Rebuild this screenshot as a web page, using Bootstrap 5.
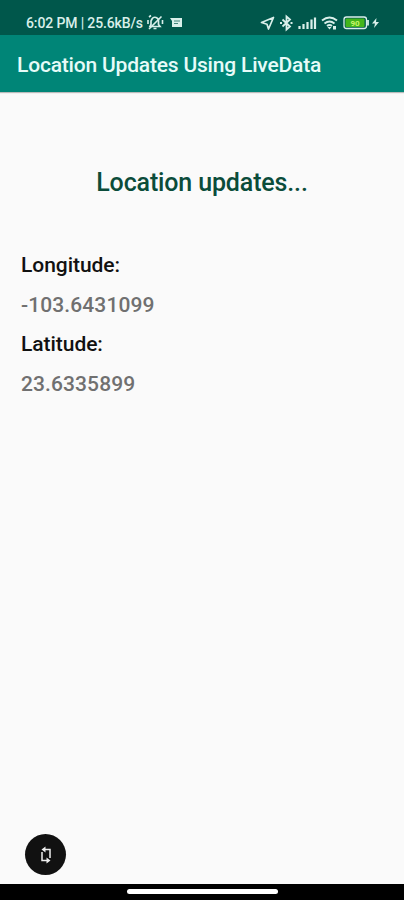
<!DOCTYPE html>
<html lang="en">
<head>
<meta charset="utf-8">
<meta name="viewport" content="width=device-width, initial-scale=1">
<title>Location Updates Using LiveData</title>
<link href="https://cdn.jsdelivr.net/npm/bootstrap@5.3.0/dist/css/bootstrap.min.css" rel="stylesheet">
<style>
body { font-family: Roboto, sans-serif; font-weight: 500; background: #fafafa; }
.screen { height: 900px; }
.status-bar { height: 35px; background: #00574b; padding: 11px 24px 0 26px; color: #d9efea; }
.status-text { width: 117px; font-size: 14px; letter-spacing: -.13px; line-height: 24px; }
.status-bar svg { display: block; }
.app-bar { height: 57px; background: #008577; padding: 0 17px; box-shadow: 0 1px 1px rgba(0,0,0,.25); }
.app-title { font-size: 21px; letter-spacing: -.19px; line-height: 24px; color: #e6fbf8; margin-top: 2px; }
.heading { font-size: 25px; letter-spacing: -.14px; line-height: 30px; color: #0b4c3a; margin: 76px 0 0; }
.readout { padding: 0 21px; margin-top: 55px; font-size: 21px; line-height: 24px; }
.readout dt { font-weight: 500; color: #111; height: 40px; letter-spacing: -.05px; }
.readout dd { color: #707070; height: 39px; margin: 0; letter-spacing: .1px; }
.rotate-btn { width: 41px; height: 41px; background: #111; margin: 0 0 9px 25px; }
.nav-strip { height: 16px; background: #000; padding-top: 5px; }
.nav-pill { width: 151px; height: 5px; background: #fff; }
</style>
</head>
<body>
<div class="screen d-flex flex-column overflow-hidden">
  <header>
    <div class="status-bar d-flex justify-content-between">
      <div class="d-flex">
        <span class="status-text text-nowrap">6:02 PM | 25.6kB/s</span>
        <svg width="42" height="24" viewBox="143 11 42 24" fill="none" stroke="#d9efea">
          <path d="M150 26.500h10l-1.500-2v-3.500a3.500 3.500 0 0 0-6.500-2l-1 2v3.500z" stroke-width="1.700"/>
          <path d="M149 29L161.500 16.500M153.500 28.500h3M148 20v4M162.500 20v4M149 17l2-1.500" stroke-width="1.600"/>
          <path d="M170 18h12v9h-10v-6z" fill="#d9efea" stroke="none"/>
          <path d="M174 21h6M174 23.500h4" stroke="#00574b" stroke-width=".7"/>
        </svg>
      </div>
      <svg width="121" height="24" viewBox="259 11 121 24" fill="none" stroke="#d9efea" stroke-width="1.700">
        <path d="M261.500 22.500L273.500 17.500L268.500 29L267 24.200Z" stroke-linejoin="round"/>
        <path d="M282.500 19.500l7.500 7-3.500 3V16.500l3.500 3-7.500 7" stroke-width="1.800"/>
        <path d="M280 23h2M290.500 23h2" stroke-width="2"/>
        <path d="M299.500 29v-3M303.500 29v-5M307.500 29v-7M311.500 29v-9.500M315 29V17.500" stroke-width="2.200"/>
        <path d="M322 20.500q7.500-6 15 0M324.500 23.500q5-4 10 0M327 26q2.500-2 5 0" stroke-width="1.900"/>
        <path d="M327.500 27h4l-2 2.500zM333 26h3v3.500h-3z" fill="#d9efea" stroke="none"/>
        <rect x="344" y="17" width="22.500" height="11.500" rx="2.500" stroke-width="1.300"/>
        <rect x="345.500" y="18.500" width="19" height="8.500" rx="1" fill="#43b51b" stroke="none"/>
        <path d="M368 20v5.500" stroke-width="1.800"/>
        <text x="355" y="25.800" text-anchor="middle" font-size="8" font-weight="700" fill="#c9f56a" stroke="none">90</text>
        <path d="M376.500 18l-4.500 5.500h3l-1 4.500 5-6h-3z" fill="#d9efea" stroke="none"/>
      </svg>
    </div>
    <div class="app-bar d-flex align-items-center">
      <h1 class="app-title mb-0 text-nowrap">Location Updates Using LiveData</h1>
    </div>
  </header>
  <main class="d-flex flex-column flex-grow-1">
    <h2 class="heading text-center">Location updates...</h2>
    <dl class="readout mb-0">
      <dt>Longitude:</dt>
      <dd>-103.6431099</dd>
      <dt>Latitude:</dt>
      <dd>23.6335899</dd>
    </dl>
    <button type="button" class="rotate-btn btn rounded-circle border-0 p-0 mt-auto d-flex align-items-center justify-content-center" aria-label="Rotate screen">
      <svg width="18" height="22" viewBox="0 0 18 22" fill="none" stroke="#eee" stroke-width="1.500">
        <path d="M10 16.500H5V8M7.500 5.500H13V14"/>
        <path d="M8.500 2.500v6l-4-3zM9.500 13.500v6l4-3z" fill="#eee" stroke="none"/>
      </svg>
    </button>
  </main>
  <footer class="nav-strip">
    <div class="nav-pill rounded-pill mx-auto"></div>
  </footer>
</div>
<script src="https://cdn.jsdelivr.net/npm/bootstrap@5.3.0/dist/js/bootstrap.bundle.min.js"></script>
</body>
</html>
